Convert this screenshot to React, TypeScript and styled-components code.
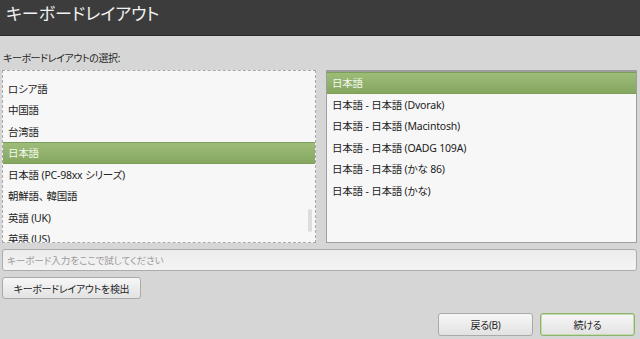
import React from 'react'
import styled, { createGlobalStyle } from 'styled-components'

const GlobalStyle = createGlobalStyle`
  html, body {
    margin: 0;
    padding: 0;
    background: #d6d6d6;
  }
  body {
    font-family: 'Noto Sans', 'Noto Sans CJK JP', sans-serif;
    font-feature-settings: 'palt';
  }
`

const languages = [
  'ロシア語',
  '中国語',
  '台湾語',
  '日本語',
  '日本語 (PC-98xx シリーズ)',
  '朝鮮語、 韓国語',
  '英語 (UK)',
  '英語 (US)',
]

const variants = [
  '日本語',
  '日本語 - 日本語 (Dvorak)',
  '日本語 - 日本語 (Macintosh)',
  '日本語 - 日本語 (OADG 109A)',
  '日本語 - 日本語 (かな 86)',
  '日本語 - 日本語 (かな)',
]

export default function App() {
  return (
    <SWindow>
      <GlobalStyle />
      <SHeader>キーボードレイアウト</SHeader>
      <SMain>
        <SLabel>キーボードレイアウトの選択:</SLabel>
        <SLists>
          <SList focused>
            <SRows offset={6.5}>
              {languages.map((name) => (
                <SRow key={name} selected={name === '日本語'}>
                  {name}
                </SRow>
              ))}
            </SRows>
            <SScrollThumb />
          </SList>
          <SList>
            <SRows offset={0}>
              {variants.map((name) => (
                <SRow key={name} selected={name === '日本語'}>
                  {name}
                </SRow>
              ))}
            </SRows>
          </SList>
        </SLists>
        <SInput placeholder="キーボード入力をここで試してください" />
        <SButton width={139}>キーボードレイアウトを検出</SButton>
        <SFooter>
          <SButton width={95} tall>
            戻る(B)
          </SButton>
          <SButton width={95} tall primary>
            続ける
          </SButton>
        </SFooter>
      </SMain>
    </SWindow>
  )
}

const SWindow = styled.div`
  width: 640px;
  height: 339px;
  display: flex;
  flex-direction: column;
  background: #d6d6d6;
  overflow: hidden;
`

const SHeader = styled.div`
  height: 36px;
  flex-shrink: 0;
  box-sizing: border-box;
  padding: 1px 0 0 6px;
  background: #3c3c3c;
  border-bottom: 1px solid #2b2b2b;
  color: #f2f2f2;
  font-size: 17px;
  line-height: 26px;
`

const SMain = styled.div`
  flex: 1;
  display: flex;
  flex-direction: column;
  padding: 15px 3px 0 2px;
`

const SLabel = styled.div`
  height: 14px;
  line-height: 14px;
  padding-left: 1px;
  font-size: 10px;
  letter-spacing: -0.4px;
  color: #262626;
`

const SLists = styled.div`
  margin-top: 5px;
  height: 173px;
  display: flex;
  gap: 10px;
`

const SList = styled.div<{ focused?: boolean }>`
  position: relative;
  flex: ${({ focused }) => (focused ? '0 0 314px' : '1')};
  box-sizing: border-box;
  background: #f7f7f7;
  border: 1px ${({ focused }) => (focused ? 'dashed #a9a9a9' : 'solid #9e9e9e')};
  border-top-width: ${({ focused }) => (focused ? '1px' : '2px')};
  overflow: hidden;
`

const SRows = styled.div<{ offset: number }>`
  display: flex;
  flex-direction: column;
  padding-top: ${({ offset }) => offset}px;
`

const SRow = styled.div<{ selected?: boolean }>`
  height: 21.5px;
  box-sizing: border-box;
  display: flex;
  align-items: center;
  padding-left: 5px;
  font-size: 10.5px;
  letter-spacing: -0.2px;
  white-space: nowrap;
  color: ${({ selected }) => (selected ? '#f4f8ee' : '#222')};
  background: ${({ selected }) =>
    selected ? 'linear-gradient(#9dbc78, #85a760)' : 'transparent'};
  border-top: 1px solid ${({ selected }) => (selected ? '#7d9d5a' : 'transparent')};
  border-bottom: 1px solid ${({ selected }) => (selected ? '#7d9d5a' : 'transparent')};
`

const SScrollThumb = styled.div`
  position: absolute;
  right: 3px;
  top: 138px;
  width: 4px;
  height: 23px;
  border-radius: 2px;
  background: #dcdcdc;
`

const SInput = styled.input`
  margin-top: 6px;
  height: 22px;
  box-sizing: border-box;
  border: 1px solid #acacac;
  border-radius: 3px;
  background: linear-gradient(#ececec, #f4f4f4);
  padding: 0 4px;
  font-family: inherit;
  font-feature-settings: 'palt';
  font-size: 9.5px;
  outline: none;
  &::placeholder {
    color: #9a9a9a;
  }
`

const SButton = styled.button<{ width: number; tall?: boolean; primary?: boolean }>`
  width: ${({ width }) => width}px;
  height: ${({ tall }) => (tall ? 23 : 22)}px;
  margin-top: ${({ tall }) => (tall ? 0 : 6)}px;
  box-sizing: border-box;
  padding: 0;
  border: 1px solid ${({ primary }) => (primary ? '#8cb46a' : '#aaaaaa')};
  border-radius: 3px;
  background: linear-gradient(#f7f7f7, #e2e2e2);
  font-family: inherit;
  font-feature-settings: 'palt';
  font-size: 10px;
  letter-spacing: -0.3px;
  color: #262626;
  box-shadow: ${({ primary }) => (primary ? 'inset 0 0 0 1px #c4dcae' : 'none')};
`

const SFooter = styled.div`
  margin-top: 14px;
  display: flex;
  justify-content: flex-end;
  gap: 7px;
  padding-right: 2px;
`
